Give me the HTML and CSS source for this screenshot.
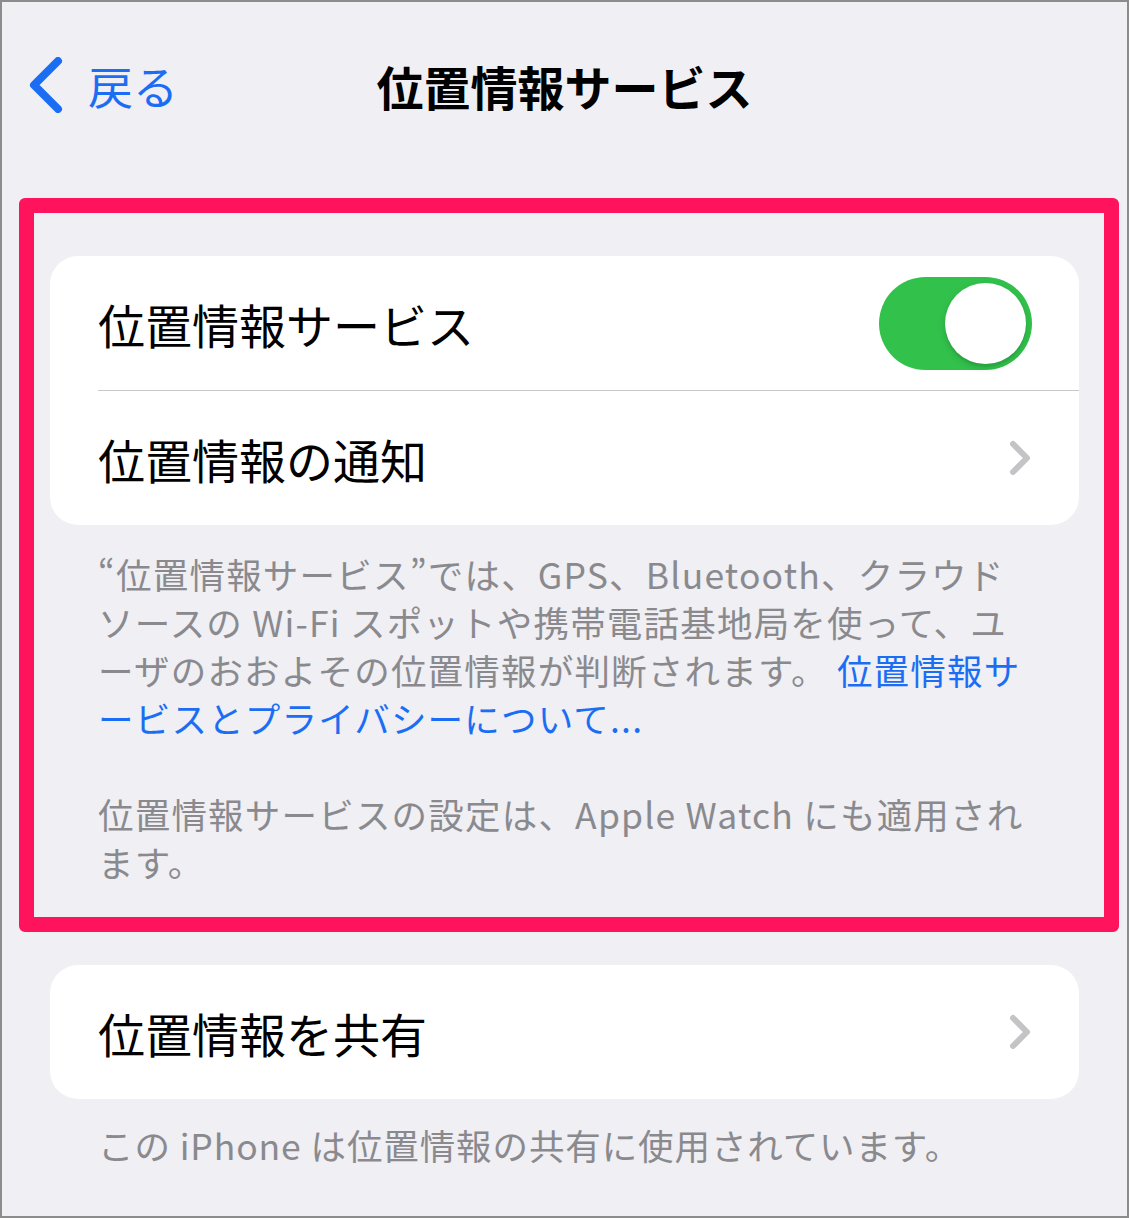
FILE: index.html
```html
<!DOCTYPE html>
<html lang="ja">
<head>
    <meta charset="UTF-8">
    <meta name="viewport" content="width=device-width, initial-scale=1.0">
    <title>位置情報サービス</title>
    <link rel="stylesheet" href="styles.css">
</head>
<body>
    <div class="screen">
        <header class="nav">
            <a class="back" href="#">
                <svg class="back-icon" width="38" height="56" viewBox="0 0 38 56">
                    <path d="M32 4 L8 28 L32 52" />
                </svg>
                <span>戻る</span>
            </a>
            <h1 class="nav-title">位置情報サービス</h1>
            <span></span>
        </header>

        <main class="content">
            <section class="group">
                <div class="cell">
                    <div class="cell-inner">
                        <span class="cell-label">位置情報サービス</span>
                        <span class="switch"><span class="knob"></span></span>
                    </div>
                </div>
                <div class="cell">
                    <div class="cell-inner">
                        <span class="cell-label">位置情報の通知</span>
                        <svg class="chevron" width="24" height="38" viewBox="0 0 24 38">
                            <path d="M5 5 L19 19 L5 33" />
                        </svg>
                    </div>
                </div>
            </section>
            <div class="group-footer">
                <p>“位置情報サービス”では、GPS、Bluetooth、クラウド<br>ソースの Wi-Fi スポットや携帯電話基地局を使って、ユ<br>ーザのおおよその位置情報が判断されます。 <a href="#">位置情報サ<br>ービスとプライバシーについて...</a></p>
                <p>位置情報サービスの設定は、Apple Watch にも適用され<br>ます。</p>
            </div>

            <section class="group group-share">
                <div class="cell">
                    <div class="cell-inner">
                        <span class="cell-label">位置情報を共有</span>
                        <svg class="chevron" width="24" height="38" viewBox="0 0 24 38">
                            <path d="M5 5 L19 19 L5 33" />
                        </svg>
                    </div>
                </div>
            </section>
            <div class="group-footer footer-share">
                <p>この iPhone は位置情報の共有に使用されています。</p>
            </div>
        </main>

        <div class="highlight"></div>
    </div>
</body>
</html>
```

FILE: styles.css
```css
body {
    margin: 0;
    background-color: #efeff4;
    font-family: "Noto Sans CJK JP", "Noto Sans", sans-serif;
}

.screen {
    position: relative;
    box-sizing: border-box;
    width: 1129px;
    height: 1218px;
    border: 2px solid #8c8c8c;
    background-color: #efeff4;
    overflow: hidden;
}

/* navigation bar */
.nav {
    display: grid;
    grid-template-columns: 1fr auto 1fr;
    align-items: center;
    height: 166px;
    padding: 0 24px;
}

.back {
    display: flex;
    align-items: center;
    gap: 24px;
    color: #1b6ef3;
    text-decoration: none;
    font-size: 45px;
}

.back-icon path {
    fill: none;
    stroke: #1b6ef3;
    stroke-width: 8;
    stroke-linecap: round;
    stroke-linejoin: round;
}

.nav-title {
    margin: 0;
    font-size: 47px;
    font-weight: 700;
    color: #000;
}

/* grouped list */
.content {
    padding: 88px 48px 0 48px;
}

.group {
    background-color: #fff;
    border-radius: 28px;
    overflow: hidden;
}

.cell {
    padding-left: 48px;
}

.cell-inner {
    display: flex;
    align-items: center;
    justify-content: space-between;
    height: 134px;
    padding-right: 47px;
    border-bottom: 1px solid #c8c8cc;
}

.cell:last-child .cell-inner {
    border-bottom: none;
}

.cell-label {
    font-size: 47px;
    color: #000;
}

.chevron path {
    fill: none;
    stroke: #c4c4c7;
    stroke-width: 6;
    stroke-linecap: round;
    stroke-linejoin: round;
}

.switch {
    display: flex;
    justify-content: flex-end;
    align-items: center;
    box-sizing: border-box;
    width: 153px;
    height: 93px;
    padding: 6px;
    border-radius: 47px;
    background-color: #32c24c;
}

.knob {
    width: 81px;
    height: 81px;
    border-radius: 50%;
    background-color: #fff;
    box-shadow: 0 3px 8px rgba(0, 0, 0, 0.15), 0 3px 1px rgba(0, 0, 0, 0.06);
}

.group-footer {
    padding: 25px 30px 0 48px;
    font-size: 35.5px;
    line-height: 48px;
    letter-spacing: 1.2px;
    color: #8a8a8e;
}

.group-footer p {
    margin: 0;
}

.group-footer p + p {
    margin-top: 48px;
}

.group-footer a {
    color: #1b6ef3;
    text-decoration: none;
}

.group-share {
    margin-top: 79px;
}

.footer-share {
    padding-top: 22px;
    letter-spacing: 0.9px;
}

/* red annotation frame over the first group */
.highlight {
    position: absolute;
    left: 17px;
    top: 196px;
    box-sizing: border-box;
    width: 1100px;
    height: 734px;
    border: 15px solid #fe135c;
    border-radius: 6px;
    pointer-events: none;
}
```
